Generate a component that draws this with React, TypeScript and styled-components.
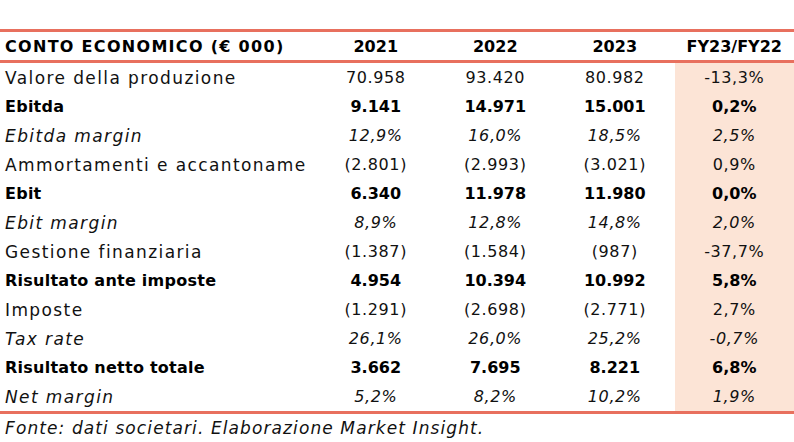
import React from "react";
import styled, { createGlobalStyle } from "styled-components";

const GlobalStyle = createGlobalStyle`
  html, body {
    margin: 0;
    padding: 0;
    background: #fff;
  }
  body {
    font-family: "DejaVu Sans", "Liberation Sans", sans-serif;
    color: #111;
  }
`;

type Kind = "plain" | "bold" | "italic" | "head";

const Page = styled.div`
  width: 794px;
  height: 442px;
  padding-top: 29px;
  box-sizing: border-box;
  overflow: hidden;
`;

const Table = styled.div`
  border-bottom: 3px solid #e8705e;
`;

const Row = styled.div<{ $head?: boolean }>`
  display: grid;
  grid-template-columns: 316px repeat(4, 1fr);
  height: ${(p) => (p.$head ? "28px" : "29px")};
  ${(p) =>
    p.$head &&
    `
    border-top: 3px solid #e8705e;
    border-bottom: 3px solid #e8705e;
  `}
`;

const Label = styled.div<{ $kind: Kind }>`
  display: flex;
  align-items: center;
  padding-left: 5px;
  white-space: nowrap;
  overflow: hidden;
  font-size: ${(p) => (p.$kind === "plain" || p.$kind === "italic" ? "17px" : "16px")};
  letter-spacing: ${(p) =>
    p.$kind === "head" ? "1.3px" : p.$kind === "bold" ? "0.25px" : "1.4px"};
  font-weight: ${(p) => (p.$kind === "bold" || p.$kind === "head" ? 700 : 400)};
  font-style: ${(p) => (p.$kind === "italic" ? "italic" : "normal")};
  color: ${(p) => (p.$kind === "bold" || p.$kind === "head" ? "#000" : "#111")};
`;

const Cell = styled.div<{ $kind: Kind; $shade?: boolean }>`
  display: flex;
  align-items: center;
  justify-content: center;
  white-space: nowrap;
  font-size: 16px;
  letter-spacing: ${(p) => (p.$kind === "plain" || p.$kind === "italic" ? "0.6px" : "0")};
  font-weight: ${(p) => (p.$kind === "bold" || p.$kind === "head" ? 700 : 400)};
  font-style: ${(p) => (p.$kind === "italic" ? "italic" : "normal")};
  color: ${(p) => (p.$kind === "bold" || p.$kind === "head" ? "#000" : "#111")};
  background: ${(p) => (p.$shade ? "#fce4d6" : "transparent")};
`;

const Footer = styled.div`
  padding: 4px 0 0 5px;
  font-size: 17px;
  letter-spacing: 1.1px;
  font-style: italic;
  white-space: nowrap;
`;

const rows: { label: string; kind: Kind; values: string[] }[] = [
  { label: "Valore della produzione", kind: "plain", values: ["70.958", "93.420", "80.982", "-13,3%"] },
  { label: "Ebitda", kind: "bold", values: ["9.141", "14.971", "15.001", "0,2%"] },
  { label: "Ebitda margin", kind: "italic", values: ["12,9%", "16,0%", "18,5%", "2,5%"] },
  { label: "Ammortamenti e accantoname", kind: "plain", values: ["(2.801)", "(2.993)", "(3.021)", "0,9%"] },
  { label: "Ebit", kind: "bold", values: ["6.340", "11.978", "11.980", "0,0%"] },
  { label: "Ebit margin", kind: "italic", values: ["8,9%", "12,8%", "14,8%", "2,0%"] },
  { label: "Gestione finanziaria", kind: "plain", values: ["(1.387)", "(1.584)", "(987)", "-37,7%"] },
  { label: "Risultato ante imposte", kind: "bold", values: ["4.954", "10.394", "10.992", "5,8%"] },
  { label: "Imposte", kind: "plain", values: ["(1.291)", "(2.698)", "(2.771)", "2,7%"] },
  { label: "Tax rate", kind: "italic", values: ["26,1%", "26,0%", "25,2%", "-0,7%"] },
  { label: "Risultato netto totale", kind: "bold", values: ["3.662", "7.695", "8.221", "6,8%"] },
  { label: "Net margin", kind: "italic", values: ["5,2%", "8,2%", "10,2%", "1,9%"] },
];

export default function App() {
  return (
    <Page>
      <GlobalStyle />
      <Table>
        <Row $head>
          <Label $kind="head">CONTO ECONOMICO (€ 000)</Label>
          {["2021", "2022", "2023", "FY23/FY22"].map((h) => (
            <Cell key={h} $kind="head">{h}</Cell>
          ))}
        </Row>
        {rows.map((r) => (
          <Row key={r.label}>
            <Label $kind={r.kind}>{r.label}</Label>
            {r.values.map((v, i) => (
              <Cell key={i} $kind={r.kind} $shade={i === 3}>{v}</Cell>
            ))}
          </Row>
        ))}
      </Table>
      <Footer>Fonte: dati societari. Elaborazione Market Insight.</Footer>
    </Page>
  );
}
